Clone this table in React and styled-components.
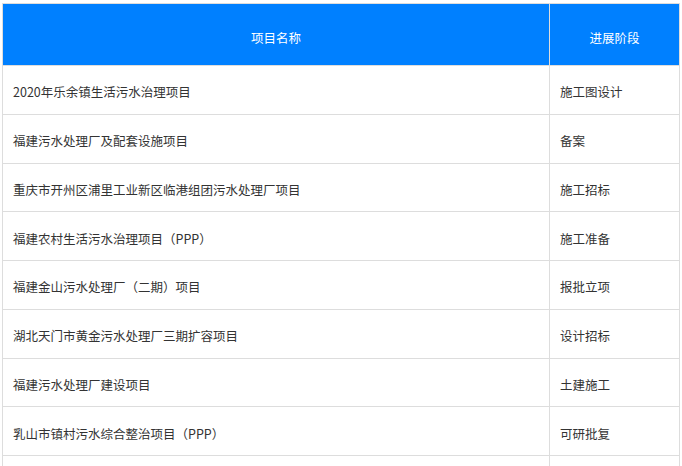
import React from "react";
import styled, { createGlobalStyle } from "styled-components";

const Global = createGlobalStyle`
  html, body { margin: 0; padding: 0; background: #fff; }
  body { font-family: "Noto Sans CJK SC", "Noto Sans", sans-serif; }
`;

const Wrap = styled.div`
  padding: 3px 0 0 2px;
`;

const Table = styled.table`
  width: 677px;
  border-collapse: collapse;
  table-layout: fixed;
  font-size: 12.5px;
  color: #333;
`;

const HeadCell = styled.th`
  height: 62px;
  box-sizing: border-box;
  padding: 6px 0 0;
  background: #0080ff;
  color: #fff;
  font-weight: normal;
  text-align: center;
  vertical-align: middle;
  border: 1px solid #ddd;
  width: ${(p) => p.$w}px;
`;

const Cell = styled.td`
  height: 48.75px;
  box-sizing: border-box;
  padding: 4px 10px 0;
  border: 1px solid #ddd;
  vertical-align: middle;
  text-align: left;
  white-space: nowrap;
`;

const rows = [
  ["2020年乐余镇生活污水治理项目", "施工图设计"],
  ["福建污水处理厂及配套设施项目", "备案"],
  ["重庆市开州区浦里工业新区临港组团污水处理厂项目", "施工招标"],
  ["福建农村生活污水治理项目（PPP）", "施工准备"],
  ["福建金山污水处理厂（二期）项目", "报批立项"],
  ["湖北天门市黄金污水处理厂三期扩容项目", "设计招标"],
  ["福建污水处理厂建设项目", "土建施工"],
  ["乳山市镇村污水综合整治项目（PPP）", "可研批复"],
  ["", ""],
];

export default function App() {
  return (
    <>
      <Global />
      <Wrap>
        <Table>
          <thead>
            <tr>
              <HeadCell $w={547}>项目名称</HeadCell>
              <HeadCell $w={130}>进展阶段</HeadCell>
            </tr>
          </thead>
          <tbody>
            {rows.map(([name, stage], i) => (
              <tr key={i}>
                <Cell>{name}</Cell>
                <Cell>{stage}</Cell>
              </tr>
            ))}
          </tbody>
        </Table>
      </Wrap>
    </>
  );
}
